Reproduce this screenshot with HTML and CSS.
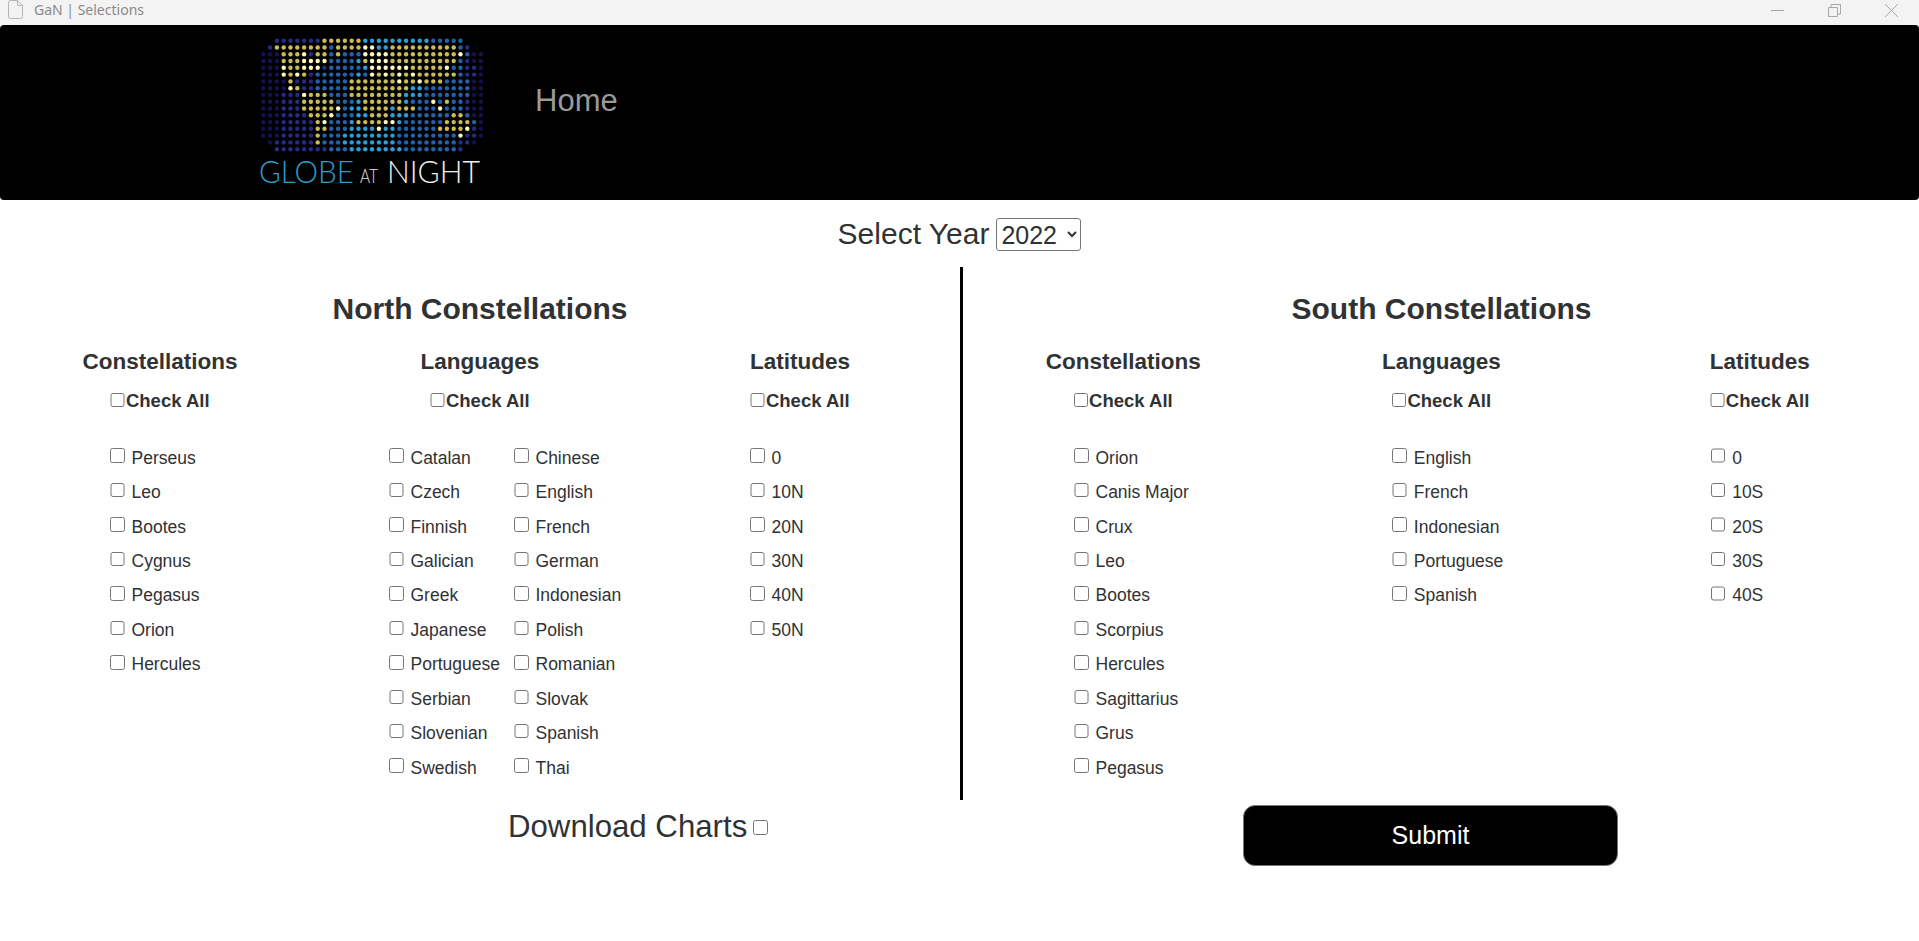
FILE: index.html
```html
<!DOCTYPE html>
<html lang="en">
<head>
<meta charset="utf-8">
<title>GaN | Selections</title>
<link rel="stylesheet" href="styles.css">
</head>
<body>
<header class="titlebar">
  <div class="title-left">
    <svg class="file-icon" viewBox="0 0 16 20" width="16" height="20"><path d="M2.500 .5h7l5 5v11a2 2 0 0 1-2 2h-10a2 2 0 0 1-2-2v-14a2 2 0 0 1 2-2zM9.500 .5v5h5" fill="none" stroke="#b5b5b5" stroke-width="1"/></svg>
    <span class="title-text">GaN | Selections</span>
  </div>
  <div class="win-controls">
    <svg viewBox="0 0 13 13" width="13" height="13"><path d="M0 6.500h13" stroke="#a8a8a8" fill="none"/></svg>
    <svg viewBox="0 0 13 13" width="13" height="13"><path d="M.5 3.500h9v9h-9zM3 3V.5h9.500V10H10" stroke="#a8a8a8" fill="none"/></svg>
    <svg viewBox="0 0 13 13" width="13" height="13"><path d="M0 0l13 13M13 0L0 13" stroke="#a8a8a8" fill="none"/></svg>
  </div>
</header>

<nav class="navbar">
  <svg class="logo" viewBox="0 0 244 162" width="244" height="162">
    <g class="dots" id="logo-dots"></g>
    <text class="logo-text logo-globe" x="1" y="148" textLength="95" lengthAdjust="spacingAndGlyphs">GLOBE</text>
    <text class="logo-text logo-at" x="102" y="148" textLength="18" lengthAdjust="spacingAndGlyphs">AT</text>
    <text class="logo-text logo-night" x="129" y="148" textLength="93" lengthAdjust="spacingAndGlyphs">NIGHT</text>
  </svg>
  <a class="nav-link">Home</a>
</nav>

<div class="year-row">
  <label class="year-label" for="year">Select Year</label>
  <select class="year-select" id="year"><option>2022</option></select>
</div>

<main class="panels">
  <section class="panel panel-north">
    <h2 class="panel-title">North Constellations</h2>
    <div class="columns">
      <div class="column">
        <h3 class="column-title">Constellations</h3>
        <label class="check-all"><input type="checkbox">Check All</label>
        <div class="list">
          <label class="item"><input type="checkbox">Perseus</label>
          <label class="item"><input type="checkbox">Leo</label>
          <label class="item"><input type="checkbox">Bootes</label>
          <label class="item"><input type="checkbox">Cygnus</label>
          <label class="item"><input type="checkbox">Pegasus</label>
          <label class="item"><input type="checkbox">Orion</label>
          <label class="item"><input type="checkbox">Hercules</label>
        </div>
      </div>
      <div class="column">
        <h3 class="column-title">Languages</h3>
        <label class="check-all"><input type="checkbox">Check All</label>
        <div class="list list-double">
          <label class="item"><input type="checkbox">Catalan</label>
          <label class="item"><input type="checkbox">Chinese</label>
          <label class="item"><input type="checkbox">Czech</label>
          <label class="item"><input type="checkbox">English</label>
          <label class="item"><input type="checkbox">Finnish</label>
          <label class="item"><input type="checkbox">French</label>
          <label class="item"><input type="checkbox">Galician</label>
          <label class="item"><input type="checkbox">German</label>
          <label class="item"><input type="checkbox">Greek</label>
          <label class="item"><input type="checkbox">Indonesian</label>
          <label class="item"><input type="checkbox">Japanese</label>
          <label class="item"><input type="checkbox">Polish</label>
          <label class="item"><input type="checkbox">Portuguese</label>
          <label class="item"><input type="checkbox">Romanian</label>
          <label class="item"><input type="checkbox">Serbian</label>
          <label class="item"><input type="checkbox">Slovak</label>
          <label class="item"><input type="checkbox">Slovenian</label>
          <label class="item"><input type="checkbox">Spanish</label>
          <label class="item"><input type="checkbox">Swedish</label>
          <label class="item"><input type="checkbox">Thai</label>
        </div>
      </div>
      <div class="column">
        <h3 class="column-title">Latitudes</h3>
        <label class="check-all"><input type="checkbox">Check All</label>
        <div class="list">
          <label class="item"><input type="checkbox">0</label>
          <label class="item"><input type="checkbox">10N</label>
          <label class="item"><input type="checkbox">20N</label>
          <label class="item"><input type="checkbox">30N</label>
          <label class="item"><input type="checkbox">40N</label>
          <label class="item"><input type="checkbox">50N</label>
        </div>
      </div>
    </div>
  </section>

  <section class="panel panel-south">
    <h2 class="panel-title">South Constellations</h2>
    <div class="columns">
      <div class="column">
        <h3 class="column-title">Constellations</h3>
        <label class="check-all"><input type="checkbox">Check All</label>
        <div class="list">
          <label class="item"><input type="checkbox">Orion</label>
          <label class="item"><input type="checkbox">Canis Major</label>
          <label class="item"><input type="checkbox">Crux</label>
          <label class="item"><input type="checkbox">Leo</label>
          <label class="item"><input type="checkbox">Bootes</label>
          <label class="item"><input type="checkbox">Scorpius</label>
          <label class="item"><input type="checkbox">Hercules</label>
          <label class="item"><input type="checkbox">Sagittarius</label>
          <label class="item"><input type="checkbox">Grus</label>
          <label class="item"><input type="checkbox">Pegasus</label>
        </div>
      </div>
      <div class="column">
        <h3 class="column-title">Languages</h3>
        <label class="check-all"><input type="checkbox">Check All</label>
        <div class="list">
          <label class="item"><input type="checkbox">English</label>
          <label class="item"><input type="checkbox">French</label>
          <label class="item"><input type="checkbox">Indonesian</label>
          <label class="item"><input type="checkbox">Portuguese</label>
          <label class="item"><input type="checkbox">Spanish</label>
        </div>
      </div>
      <div class="column">
        <h3 class="column-title">Latitudes</h3>
        <label class="check-all"><input type="checkbox">Check All</label>
        <div class="list">
          <label class="item"><input type="checkbox">0</label>
          <label class="item"><input type="checkbox">10S</label>
          <label class="item"><input type="checkbox">20S</label>
          <label class="item"><input type="checkbox">30S</label>
          <label class="item"><input type="checkbox">40S</label>
        </div>
      </div>
    </div>
  </section>
</main>

<footer class="actions">
  <label class="download"><span>Download Charts</span><input type="checkbox"></label>
  <button class="submit" type="button">Submit</button>
</footer>
<script src="logo.js"></script>
</body>
</html>
```
FILE: styles.css
```css
* { box-sizing: border-box; }
html, body { margin: 0; padding: 0; }
body {
  background: #fff;
  color: #303234;
  font-family: "Liberation Sans", Arial, sans-serif;
  min-height: 941px;
}
input[type="checkbox"] {
  width: 14.500px;
  height: 14.500px;
  margin: 0;
  flex: none;
}

.titlebar {
  height: 25px;
  background: #f3f3f3;
  display: flex;
  justify-content: space-between;
  align-items: center;
  padding: 0 21px 0 8px;
}
.title-left { display: flex; align-items: center; gap: 10px; }
.file-icon { margin-top: -6px; }
.title-text {
  font-family: "Noto Sans", sans-serif;
  font-size: 14px;
  line-height: 20px;
  margin-top: -5px;
  color: #8a8a8a;
}
.win-controls { display: flex; gap: 44px; margin-top: -5px; }
.win-controls svg { display: block; }

.navbar {
  height: 175px;
  background: #000;
  border-radius: 4px;
  display: flex;
  align-items: flex-start;
  padding-left: 258px;
}
.logo { margin-top: 10px; flex: none; }
.dots { filter: blur(.25px); }
.logo-text { font-family: Lato, "Liberation Sans", sans-serif; font-weight: 300; font-size: 32px; }
.logo-globe { fill: #2a9fd0; }
.logo-at { fill: #e4e4e4; font-size: 19px; }
.logo-night { fill: #f0f0f0; }
.dot-n { fill: #12124c; }
.dot-d { fill: #252a85; }
.dot-b { fill: #2262ad; }
.dot-c { fill: #2a9fd8; }
.dot-y { fill: #cbbb55; }
.dot-w { fill: #fff9bc; }
.nav-link {
  margin: 58px 0 0 33px;
  font-size: 31px;
  line-height: 36px;
  color: #9a9a9a;
}

.year-row {
  height: 67px;
  display: flex;
  justify-content: center;
  align-items: flex-start;
  padding-top: 18px;
  gap: 7px;
}
.year-label { font-size: 30px; line-height: 31px; }
.year-select {
  width: 85px;
  height: 33px;
  font-family: inherit;
  font-size: 25px;
  color: #303234;
  background: #fff;
  border: 1px solid #767676;
  border-radius: 3px;
  padding: 0;
}

.panels { display: flex; }
.panel { width: 50%; padding: 25px 0 15px; }
.panel-north { width: 963px; border-right: 3px solid #000; }
.panel-south { flex: 1; padding-left: 1px; }
.panel-title {
  margin: 0 0 23px;
  font-size: 30px;
  line-height: 34px;
  font-weight: 700;
  text-align: center;
}
.columns { display: grid; grid-template-columns: repeat(3, 1fr); }
.column { display: flex; flex-direction: column; align-items: stretch; }
.column-title {
  margin: 0 0 15px;
  font-size: 22.500px;
  line-height: 26px;
  font-weight: 700;
  text-align: center;
}
.check-all {
  display: flex;
  justify-content: center;
  align-items: center;
  gap: 1px;
  font-size: 18.500px;
  font-weight: 700;
  line-height: 22px;
  margin-bottom: 29px;
}
.check-all input { position: relative; top: -1px; }
.list { padding-left: 110px; }
.list-double {
  padding-left: 69px;
  display: grid;
  grid-template-columns: 125px 125px;
}
.item {
  display: flex;
  align-items: center;
  gap: 7px;
  height: 34.450px;
  font-size: 17.500px;
  white-space: nowrap;
}
.item input { position: relative; top: -2.500px; }

.actions {
  display: flex;
  align-items: flex-start;
  padding: 5px 301px 0 508px;
  justify-content: space-between;
}
.download {
  display: flex;
  align-items: center;
  gap: 6px;
  font-size: 31.200px;
  line-height: 36px;
  margin-top: 4px;
}
.submit {
  width: 375px;
  height: 61px;
  background: #000;
  color: #fff;
  font-family: inherit;
  font-size: 25px;
  border: 1px solid #777;
  border-radius: 12px;
}
```
FILE: logo.js
```js
var rows = [
  "..dddddddyyyyyyccccccccccbbbbb...",
  ".dyyyyyyyybyyyywwccyyyyyyyyyybd..",
  "nnnyyywdyybybbbwwwwyyyyyyyyyywbnn",
  "nnnyyywwwwbbbbcywwwyyyyyyyyyybdnn",
  "nnnwyywwwdbbbbbcwwwwwwyyyyywbbddn",
  "nnnwywydbbbbbbcbwywywywyyyyyybddn",
  "nnnnydddbbbbbyyyyyyywyywyyybbbbnn",
  "nnnnwyddbbbbbyyyyyyyyyccbbbbbbbnn",
  "nnndddwyyybbbyyyyyyyycccbbbbbbbnn",
  "nnndddyyyyybbbcyyyyyycbbbwbybbdnn",
  "nnndddyyyyywbccyyyycyyybbbwbbbdnn",
  "nnnddddyyywbbbccyyycccbbbbbbyybnn",
  "nnndddddywbbbcyyyywwcbbbbbbyyyybn",
  "nnndddddyybbbccccwccbbbbbbyyyywdn",
  "nnndddddybbbccccccccbbbbbbbbbwddn",
  ".nddddddybbbccccccccbbbbbbbbbddn.",
  "..ddddddddbbbccccccccbbbbbbbbd..."
];
var group = document.getElementById("logo-dots");
var ns = "http://www.w3.org/2000/svg";
rows.forEach(function (row, r) {
  row.split("").forEach(function (ch, c) {
    if (ch === ".") return;
    var dot = document.createElementNS(ns, "circle");
    dot.setAttribute("cx", (5.3 + 6.8 * c).toFixed(1));
    dot.setAttribute("cy", (5.7 + 6.78 * r).toFixed(1));
    dot.setAttribute("r", "2.2");
    dot.setAttribute("class", "dot-" + ch);
    group.appendChild(dot);
  });
});
```
